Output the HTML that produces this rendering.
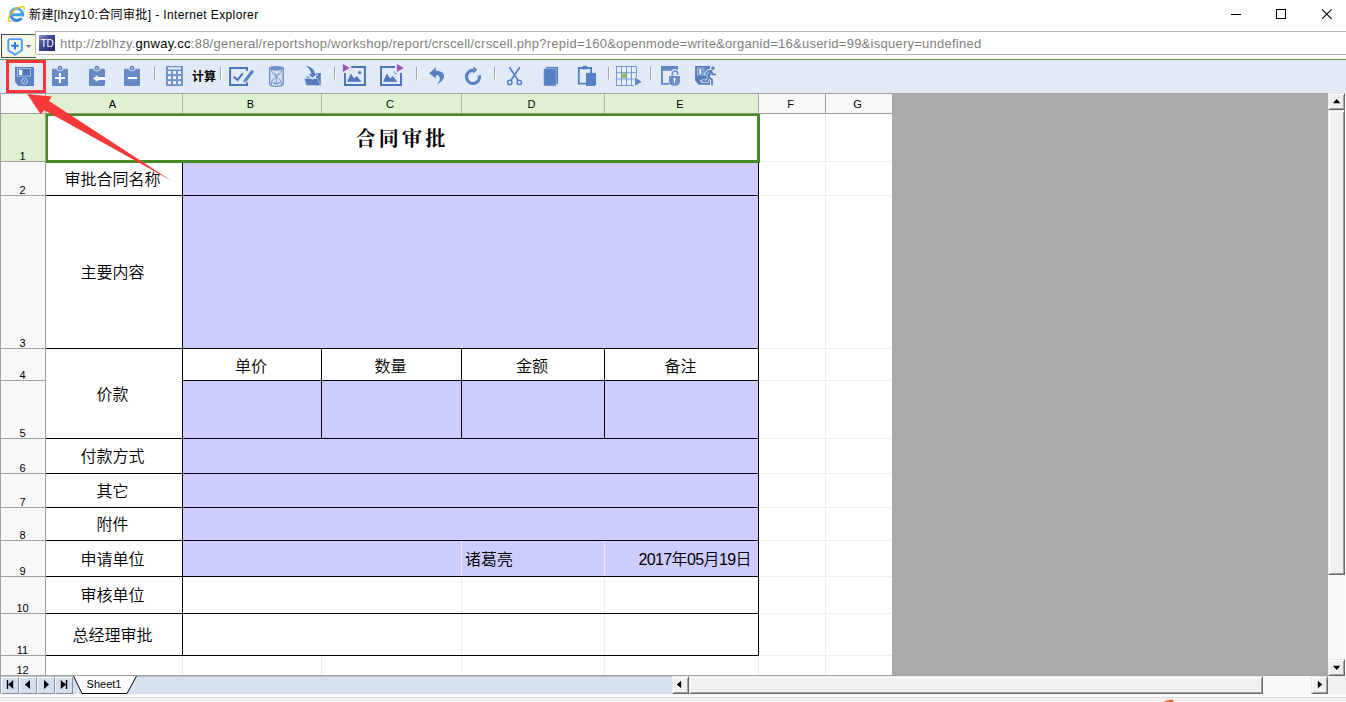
<!DOCTYPE html>
<html lang="zh-CN">
<head>
<meta charset="utf-8">
<title>新建[lhzy10:合同审批] - Internet Explorer</title>
<style>
html,body{margin:0;padding:0;}
body{width:1346px;height:702px;position:relative;overflow:hidden;background:#fff;font-family:"Liberation Sans","Noto Sans CJK SC",sans-serif;}
#win{position:absolute;left:0;top:0;width:1346px;height:702px;overflow:hidden;background:#fff;}
#win div,#win svg,#win span.abs{position:absolute;box-sizing:content-box;}
.t{font-family:"Liberation Sans","Noto Sans CJK SC",sans-serif;font-size:16px;font-weight:350;color:#000;white-space:nowrap;overflow:visible;}
.d{letter-spacing:-0.6px;}
.title{font-family:"Liberation Serif","Noto Serif CJK SC",serif;font-size:20px;font-weight:bold;color:#000;text-align:center;white-space:nowrap;letter-spacing:3.3px;}
.h{font-family:"Liberation Sans","Noto Sans CJK SC",sans-serif;font-size:11px;color:#000;white-space:nowrap;}
</style>
<style>
#win div.sb{box-sizing:border-box;background:#f0f0f0;border-top:1px solid #e8e8e8;border-left:1px solid #e8e8e8;border-right:1px solid #696969;border-bottom:1px solid #696969;box-shadow:inset 1px 1px 0 #fff,inset -1px -1px 0 #a0a0a0;}
.nb{width:16px;height:15px;background:#d3dfee;border-top:1px solid #fff;border-left:1px solid #fff;border-right:1px solid #8c8c8c;border-bottom:1px solid #8c8c8c;}
</style>
</head>
<body>
<div id="win">
<!-- title bar -->
<div id="titlebar" style="left:0;top:0;width:1346px;height:31px;background:#fff;">
<svg style="left:0px;top:0px" width="30" height="30" viewBox="0 0 30 30">
<defs><linearGradient id="ieg" gradientUnits="userSpaceOnUse" x1="0" y1="7" x2="0" y2="22"><stop offset="0" stop-color="#5cb8f0"/><stop offset="1" stop-color="#2a86d2"/></linearGradient></defs>
<ellipse cx="16.650" cy="14.500" rx="5.900" ry="5.950" fill="none" stroke="url(#ieg)" stroke-width="3.100"/>
<rect x="17" y="16.300" width="8" height="1.600" fill="#fff"/>
<rect x="11.500" y="13.300" width="12.600" height="3" fill="#3f9fe3"/>
<path d="M11.300 21.300C7.800 22.300 7.400 18.500 10.800 13.800C14 9.300 19.800 6 23.200 6.700C24.600 7.100 24.500 8.600 23.800 9.700" fill="none" stroke="#f4b400" stroke-width="1.200"/>
</svg>
<div style="left:29px;top:6px;height:18px;line-height:18px;font-size:12px;color:#000;white-space:nowrap;letter-spacing:0.385px" id="ttl">新建[lhzy10:合同审批] - Internet Explorer</div>
<svg style="left:1226px;top:4px" width="112" height="20" viewBox="0 0 112 20">
<path d="M5 10.5h10" stroke="#000" stroke-width="1" fill="none"/>
<rect x="50.5" y="5.5" width="9" height="9" stroke="#000" stroke-width="1" fill="none"/>
<path d="M96 5.3l9.6 9.6M105.6 5.3L96 14.9" stroke="#000" stroke-width="1.1" fill="none"/>
</svg>
</div>
<!-- address row -->
<div id="addr" style="left:35px;top:31px;width:1311px;height:22px;border-top:1px solid #b4b4b4;border-bottom:1px solid #b4b4b4;border-left:1px solid #b4b4b4;background:#fff;"></div>
<div id="tabbtn" style="left:1px;top:34px;width:34px;height:22px;border:1px solid #4a4a4a;border-right:none;background:#f1f8e6;">
<svg style="left:-2px;top:-1px" width="36" height="24" viewBox="0 34 36 24">
<path d="M10.200 39.100H20a1.900 1.900 0 0 1 1.900 1.900V50.200L15.100 54.600L8.300 50.200V41a1.900 1.900 0 0 1 1.900 -1.900z" fill="none" stroke="#4e9cf7" stroke-width="1.900" stroke-linejoin="round"/>
<path d="M15 42v7.600M11.200 45.800h7.600" stroke="#2a7af6" stroke-width="2" fill="none"/>
<path d="M26 45h5.200l-2.600 3z" fill="#6b7885"/>
</svg>
</div>
<div id="addrl" style="left:35px;top:32px;width:1px;height:22px;background:#b4b4b4"></div>
<div id="fav" style="left:39px;top:35px;width:16px;height:16px;background:linear-gradient(135deg,#8f97c9 0%,#4a56a0 35%,#2c377f 70%,#28306f 100%);color:#fff;font-size:10px;line-height:17px;text-align:center;letter-spacing:-0.3px;overflow:hidden">TD</div>
<div id="url" style="left:60px;top:34px;height:19px;line-height:19px;font-size:13px;color:#7f7f7f;white-space:nowrap;letter-spacing:0.252px">http://zblhzy.<span style="color:#000">gnway.cc</span>:88/general/reportshop/workshop/report/crscell/crscell.php?repid=160&amp;openmode=write&amp;organid=16&amp;userid=99&amp;isquery=undefined</div>
<!-- toolbar -->
<div style="left:0;top:59px;width:1346px;height:1px;background:#6f9b45"></div>
<div id="toolbar" style="left:0;top:60px;width:1346px;height:33px;background:#e1eaf6;">
<svg style="left:0;top:0" width="740" height="33" viewBox="0 60 740 33">
<!-- save -->
<path d="M15 67H34V86H18.200L15 81.500Z" fill="#5b80bd"/>
<rect x="17.400" y="68.500" width="13" height="7.700" fill="#4f76b6" stroke="#a9bce0" stroke-width="1"/>
<rect x="18.900" y="69.900" width="3.400" height="5.200" fill="#f4f7fc"/>
<circle cx="24.500" cy="81.300" r="2.900" fill="none" stroke="#d3def0" stroke-width="0.900"/>
<circle cx="24.500" cy="81.300" r="0.700" fill="#d3def0"/>
<!-- clipboards -->
<g fill="#6589c4">
<rect x="52" y="68.800" width="16" height="17.200" rx="1.300"/>
<rect x="89" y="68.800" width="16" height="17.200" rx="1.300"/>
<rect x="124" y="68.800" width="16" height="17.200" rx="1.300"/>
</g>
<g fill="#a9bee2" stroke="#6589c4" stroke-width="1.500">
<circle cx="60" cy="68.200" r="1.700"/><circle cx="97" cy="68.200" r="1.700"/><circle cx="132" cy="68.200" r="1.700"/>
</g>
<g fill="none" stroke="#b9c9e7" stroke-width="1.500">
<path d="M56.500 69.300Q60 72.300 63.500 69.300"/><path d="M93.500 69.300Q97 72.300 100.500 69.300"/><path d="M128.500 69.300Q132 72.300 135.500 69.300"/>
</g>
<path d="M55 78h10M59.900 73v10" stroke="#f6f9fd" stroke-width="2.100" fill="none"/>
<path d="M92.700 78.500L97.900 75V77H105.200V80H97.900V81.800Z" fill="#f2f6fb"/>
<path d="M127.800 78.050h9.300" stroke="#f6f9fd" stroke-width="2.100" fill="none"/>
<!-- separators -->
<g>
<path d="M154.500 67v12.500M220.500 67v12.500M334.500 67v12.500M416.500 67v12.500M494.500 67v12.500M608.500 67v12.500M650.500 67v12.500" stroke="#a2a2a2" stroke-width="1" fill="none"/>
<path d="M155.500 67.500v12.500M221.500 67.500v12.500M335.500 67.500v12.500M417.500 67.500v12.500M495.500 67.500v12.500M609.500 67.500v12.500M651.500 67.500v12.500" stroke="#fff" stroke-width="1" fill="none"/>
</g>
<!-- calculator -->
<rect x="166" y="66" width="17" height="20" fill="#7292ca"/>
<rect x="168" y="67.300" width="13" height="2.100" fill="#e6edf8"/>
<g fill="#eef3fa">
<rect x="168" y="71.100" width="3" height="2.900"/><rect x="173" y="71.100" width="3" height="2.900"/><rect x="178" y="71.100" width="3" height="2.900"/>
<rect x="168" y="76.200" width="3" height="2.900"/><rect x="173" y="76.200" width="3" height="2.900"/><rect x="178" y="76.200" width="3" height="2.900"/>
<rect x="168" y="81.200" width="3" height="2.900"/><rect x="173" y="81.200" width="3" height="2.900"/><rect x="178" y="81.200" width="3" height="2.900"/>
</g>
<text x="192" y="81" font-family="Liberation Sans, Noto Sans CJK SC, sans-serif" font-size="12" font-weight="bold" fill="#000">计算</text>
<!-- check edit -->
<path d="M247 71.100V68H230.100V84.900H247V82.300" fill="none" stroke="#4a76bb" stroke-width="2"/>
<path d="M233.500 76.700L237.600 80L242.800 73.400" fill="none" stroke="#4f7abd" stroke-width="2.200"/>
<path d="M245.300 80.500L253 70.600" fill="none" stroke="#5580c2" stroke-width="3"/>
<path d="M243.200 82.600L244 79.300L246.600 81.300Z" fill="#5580c2"/>
<!-- hourglass -->
<path d="M269.600 68.500V83.700C269.600 87.200 283.200 87.200 283.200 83.700V68.500Z" fill="#d4dff1" stroke="#7292ca" stroke-width="1.400"/>
<ellipse cx="276.400" cy="68.300" rx="7.500" ry="2.400" fill="#7090c9"/>
<path d="M271.300 70.700C272.300 73.500 275 75.300 276.400 77.300C277.800 75.300 280.500 73.500 281.500 70.700M271.600 84.800C270.800 80.800 273.800 78.300 276.400 77.300C279 78.300 282 80.800 281.200 84.800" fill="none" stroke="#6f90ca" stroke-width="1"/>
<path d="M273 82.500Q276.400 85 279.800 82.500" fill="none" stroke="#6f90ca" stroke-width="1.300"/>
<path d="M276.400 76v7M274.500 73L276.400 75.500L278.500 73.500" stroke="#6f90ca" stroke-width="0.900" fill="none"/>
<!-- folder arrow -->
<path d="M316 74L318.500 73H320.800V85.500H316Z" fill="#5b80bd"/>
<path d="M306.300 76.600H310L311 78.500H306.300Z" fill="#7b9ad0"/>
<path d="M304.200 78.500H317.700L320.600 85.600H306.300Z" fill="#567dbb" stroke="#e8eff9" stroke-width="0.500"/>
<path d="M305.800 66C310.500 66.200 314.200 69 314.900 73.700L317.400 73.500L312.500 77.800L308.700 74.300L311.300 74C310.800 70.500 308.800 68 305.800 66Z" fill="#567dbb"/>
<path d="M308.300 75.300L312.500 79L317.800 74.300" fill="none" stroke="#eef3fa" stroke-width="0.900"/>
<!-- image 1 -->
<path d="M351.200 67H364.900V84.900H345V73" fill="none" stroke="#4a76bb" stroke-width="2"/>
<path d="M347.100 81.800L350.900 73.400L354.200 78.600L356.800 76L361.600 81.800Z" fill="#4f7abd"/>
<circle cx="359.600" cy="72.500" r="1.600" fill="#4f7abd"/>
<path d="M342.900 64.100L349.700 67.900L342.900 71.900Z" fill="#a150b9"/>
<!-- image 2 -->
<path d="M395 67H381V84.900H401V73" fill="none" stroke="#4a76bb" stroke-width="2"/>
<path d="M383.100 81.800L386.900 73.400L390.200 78.600L392.800 76L397.600 81.800Z" fill="#4f7abd"/>
<path d="M394.300 71.600A1.700 1.700 0 0 0 396.800 73.600" fill="none" stroke="#4f7abd" stroke-width="1"/>
<path d="M396.900 64.100L403.700 67.900L396.900 71.900Z" fill="#a150b9"/>
<!-- undo -->
<path d="M429.200 73.200L435.900 67.300V70.800C441 70.800 444.300 73 444 76.500C443.700 80 440.500 82.500 437 84.500C439.500 81.500 440.500 79 439.500 77C438.800 75.600 437.500 75.300 435.900 75.300V78.600Z" fill="#5580c2"/>
<!-- redo -->
<path d="M473.600 70.450A6.550 6.550 0 1 0 479.350 75.400" fill="none" stroke="#5580c2" stroke-width="3.100"/>
<path d="M473.400 66.300L477.300 69.500L473.400 73.700Z" fill="#5580c2"/>
<!-- scissors -->
<path d="M509.400 67.200L518.200 80.500M519.800 67.200L510.800 80.500" fill="none" stroke="#5580c2" stroke-width="1.700"/>
<circle cx="509.800" cy="82.400" r="2.200" fill="none" stroke="#5580c2" stroke-width="1.500"/>
<circle cx="519.300" cy="82.400" r="2.200" fill="none" stroke="#5580c2" stroke-width="1.500"/>
<!-- copy -->
<path d="M546 66.900H558.100V84.100H546Z" fill="#5580c2"/>
<path d="M543.700 68.600H556.200V86H543.700Z" fill="#5580c2" stroke="#c9d7ee" stroke-width="0.500"/>
<!-- paste -->
<path d="M586 68H578.800V83.600H586" fill="none" stroke="#5580c2" stroke-width="1.800"/>
<path d="M586 68H591.100V73" fill="none" stroke="#5580c2" stroke-width="1.800"/>
<rect x="582.600" y="65.900" width="4.600" height="3.500" fill="#5580c2"/>
<path d="M586 72.900H596.100V86H586Z" fill="#5580c2"/>
<path d="M594.500 86L596.100 84.500V86Z" fill="#e1eaf6"/>
<!-- grid -->
<rect x="616" y="66" width="21" height="20" fill="#e8eef8"/>
<path d="M616.500 66V86M621.500 66V86M626.500 66V86M631.500 66V86M636.500 66V77M616 66.500H637M616 72.600H637M616 79H635M616 85.500H634" fill="none" stroke="#7a99d0" stroke-width="1"/>
<rect x="622.100" y="73.200" width="4" height="4.700" fill="#8cc152"/>
<path d="M634.300 75.800L642.300 81.800L634.300 86.300Z" fill="#e1eaf6"/>
<path d="M635 77L641.700 81.900L635 85.800Z" fill="#6389c6"/>
<!-- lock window -->
<path d="M661 65.900H678V70.700H662.900V83H669V84.800H661Z" fill="#6287c4"/>
<path d="M672.300 76V73.200A2.900 2.900 0 0 1 677.600 72.300V75" fill="none" stroke="#e1eaf6" stroke-width="3.800"/>
<path d="M672.300 76.500V73.200A2.900 2.900 0 0 1 677.600 72.300V75" fill="none" stroke="#6f90ca" stroke-width="1.700"/>
<path d="M669 76H680V81.500C680 87.400 669 87.400 669 81.500Z" fill="#7090c9"/>
<circle cx="674.500" cy="79" r="1.100" fill="#fff"/><rect x="674" y="79" width="1" height="3.900" fill="#fff"/>
<!-- exit -->
<path d="M695.100 65.900H710V84.800H698.400L695.100 80.500Z" fill="#567dbb"/>
<rect x="697.500" y="68" width="6.500" height="6.900" fill="#6a8cc6" stroke="#b5c6e5" stroke-width="0.800"/>
<rect x="699.300" y="69" width="2" height="5" fill="#eef3fa"/>
<g fill="none" stroke="#e1eaf6" stroke-width="3.400" stroke-linecap="round" stroke-linejoin="round">
<path d="M705.600 74L708.500 70.700H711.300"/>
<path d="M708.500 77.400L707.500 81.100H702"/>
</g>
<path d="M710 70H713V78H710Z" fill="#e1eaf6"/>
<circle cx="712.900" cy="68.300" r="1.700" fill="#567dbb"/>
<g fill="none" stroke="#567dbb" stroke-width="1.800" stroke-linecap="round" stroke-linejoin="round">
<path d="M705.800 74L708.500 70.900H711.200L712.500 74.400H715.200"/>
<path d="M711 71L708.600 77.300L712 79.600V84.600"/>
<path d="M708.600 77.300L707.500 81.100H702.500"/>
</g>
</svg>

</div>
<div id="grid">
<div style="left:0px;top:93px;width:892px;height:582px;background:#fff;"></div>
<div style="left:892px;top:93px;width:436px;height:583px;background:#ababab;"></div>
<div style="left:46px;top:161px;width:846px;height:1px;background:#eeeeee;"></div>
<div style="left:46px;top:195px;width:846px;height:1px;background:#eeeeee;"></div>
<div style="left:46px;top:348px;width:846px;height:1px;background:#eeeeee;"></div>
<div style="left:46px;top:380px;width:846px;height:1px;background:#eeeeee;"></div>
<div style="left:46px;top:438px;width:846px;height:1px;background:#eeeeee;"></div>
<div style="left:46px;top:473px;width:846px;height:1px;background:#eeeeee;"></div>
<div style="left:46px;top:507px;width:846px;height:1px;background:#eeeeee;"></div>
<div style="left:46px;top:540px;width:846px;height:1px;background:#eeeeee;"></div>
<div style="left:46px;top:576px;width:846px;height:1px;background:#eeeeee;"></div>
<div style="left:46px;top:613px;width:846px;height:1px;background:#eeeeee;"></div>
<div style="left:46px;top:655px;width:846px;height:1px;background:#eeeeee;"></div>
<div style="left:182px;top:114px;width:1px;height:561px;background:#eeeeee;"></div>
<div style="left:321px;top:114px;width:1px;height:561px;background:#eeeeee;"></div>
<div style="left:461px;top:114px;width:1px;height:561px;background:#eeeeee;"></div>
<div style="left:604px;top:114px;width:1px;height:561px;background:#eeeeee;"></div>
<div style="left:758px;top:114px;width:1px;height:561px;background:#eeeeee;"></div>
<div style="left:825px;top:114px;width:1px;height:561px;background:#eeeeee;"></div>
<div style="left:46px;top:114px;width:712px;height:47px;background:#fff;"></div>
<div style="left:46px;top:162px;width:136px;height:33px;background:#fff;"></div>
<div style="left:183px;top:162px;width:575px;height:33px;background:#ccccff;"></div>
<div style="left:46px;top:196px;width:136px;height:152px;background:#fff;"></div>
<div style="left:183px;top:196px;width:575px;height:152px;background:#ccccff;"></div>
<div style="left:46px;top:349px;width:136px;height:89px;background:#fff;"></div>
<div style="left:183px;top:349px;width:138px;height:31px;background:#fff;"></div>
<div style="left:183px;top:381px;width:138px;height:57px;background:#ccccff;"></div>
<div style="left:322px;top:349px;width:139px;height:31px;background:#fff;"></div>
<div style="left:322px;top:381px;width:139px;height:57px;background:#ccccff;"></div>
<div style="left:462px;top:349px;width:142px;height:31px;background:#fff;"></div>
<div style="left:462px;top:381px;width:142px;height:57px;background:#ccccff;"></div>
<div style="left:605px;top:349px;width:153px;height:31px;background:#fff;"></div>
<div style="left:605px;top:381px;width:153px;height:57px;background:#ccccff;"></div>
<div style="left:46px;top:439px;width:136px;height:34px;background:#fff;"></div>
<div style="left:183px;top:439px;width:575px;height:34px;background:#ccccff;"></div>
<div style="left:46px;top:474px;width:136px;height:33px;background:#fff;"></div>
<div style="left:183px;top:474px;width:575px;height:33px;background:#ccccff;"></div>
<div style="left:46px;top:508px;width:136px;height:32px;background:#fff;"></div>
<div style="left:183px;top:508px;width:575px;height:32px;background:#ccccff;"></div>
<div style="left:46px;top:541px;width:136px;height:35px;background:#fff;"></div>
<div style="left:183px;top:541px;width:278px;height:35px;background:#ccccff;"></div>
<div style="left:462px;top:541px;width:142px;height:35px;background:#ccccff;"></div>
<div style="left:605px;top:541px;width:153px;height:35px;background:#ccccff;"></div>
<div style="left:46px;top:577px;width:136px;height:36px;background:#fff;"></div>
<div style="left:183px;top:577px;width:278px;height:36px;background:#fff;"></div>
<div style="left:46px;top:614px;width:136px;height:41px;background:#fff;"></div>
<div style="left:183px;top:614px;width:278px;height:41px;background:#fff;"></div>
<div style="left:461px;top:541px;width:1px;height:35px;background:#e9e9f6;"></div>
<div style="left:604px;top:541px;width:1px;height:35px;background:#e9e9f6;"></div>
<div style="left:46px;top:195px;width:713px;height:1px;background:#000;"></div>
<div style="left:46px;top:348px;width:713px;height:1px;background:#000;"></div>
<div style="left:46px;top:438px;width:713px;height:1px;background:#000;"></div>
<div style="left:46px;top:473px;width:713px;height:1px;background:#000;"></div>
<div style="left:46px;top:507px;width:713px;height:1px;background:#000;"></div>
<div style="left:46px;top:540px;width:713px;height:1px;background:#000;"></div>
<div style="left:46px;top:576px;width:713px;height:1px;background:#000;"></div>
<div style="left:46px;top:613px;width:713px;height:1px;background:#000;"></div>
<div style="left:46px;top:655px;width:713px;height:1px;background:#000;"></div>
<div style="left:182px;top:380px;width:577px;height:1px;background:#000;"></div>
<div style="left:182px;top:162px;width:1px;height:494px;background:#000;"></div>
<div style="left:758px;top:162px;width:1px;height:494px;background:#000;"></div>
<div style="left:321px;top:348px;width:1px;height:91px;background:#000;"></div>
<div style="left:461px;top:348px;width:1px;height:91px;background:#000;"></div>
<div style="left:604px;top:348px;width:1px;height:91px;background:#000;"></div>
<div style="left:0px;top:93px;width:893px;height:21px;background:#a0a0a0;"></div>
<div style="left:1px;top:94px;width:44px;height:19px;background:#f8f8f8;"></div>
<div style="left:46px;top:94px;width:136px;height:19px;background:#e0f1d1;"></div>
<div class="h" style="left:43px;top:95px;width:139px;height:19px;line-height:19px;text-align:center;">A</div>
<div style="left:183px;top:94px;width:138px;height:19px;background:#e0f1d1;"></div>
<div class="h" style="left:180px;top:95px;width:141px;height:19px;line-height:19px;text-align:center;">B</div>
<div style="left:322px;top:94px;width:139px;height:19px;background:#e0f1d1;"></div>
<div class="h" style="left:319px;top:95px;width:142px;height:19px;line-height:19px;text-align:center;">C</div>
<div style="left:462px;top:94px;width:142px;height:19px;background:#e0f1d1;"></div>
<div class="h" style="left:459px;top:95px;width:145px;height:19px;line-height:19px;text-align:center;">D</div>
<div style="left:605px;top:94px;width:153px;height:19px;background:#e0f1d1;"></div>
<div class="h" style="left:602px;top:95px;width:156px;height:19px;line-height:19px;text-align:center;">E</div>
<div style="left:759px;top:94px;width:66px;height:19px;background:#f9f9f9;"></div>
<div class="h" style="left:756px;top:95px;width:69px;height:19px;line-height:19px;text-align:center;">F</div>
<div style="left:826px;top:94px;width:66px;height:19px;background:#f9f9f9;"></div>
<div class="h" style="left:823px;top:95px;width:69px;height:19px;line-height:19px;text-align:center;">G</div>
<div style="left:182px;top:94px;width:1px;height:19px;background:#a9b79e;"></div>
<div style="left:321px;top:94px;width:1px;height:19px;background:#a9b79e;"></div>
<div style="left:461px;top:94px;width:1px;height:19px;background:#a9b79e;"></div>
<div style="left:604px;top:94px;width:1px;height:19px;background:#a9b79e;"></div>
<div style="left:46px;top:113px;width:713px;height:1px;background:#7f9a6c;"></div>
<div style="left:0px;top:114px;width:46px;height:561px;background:#a0a0a0;"></div>
<div style="left:1px;top:114px;width:44px;height:47px;background:#e0f1d1;"></div>
<div class="h" style="left:0px;top:150px;width:45px;height:13px;line-height:13px;text-align:center">1</div>
<div style="left:1px;top:162px;width:44px;height:33px;background:#f8f8f8;"></div>
<div class="h" style="left:0px;top:184px;width:45px;height:13px;line-height:13px;text-align:center">2</div>
<div style="left:1px;top:196px;width:44px;height:152px;background:#f8f8f8;"></div>
<div class="h" style="left:0px;top:337px;width:45px;height:13px;line-height:13px;text-align:center">3</div>
<div style="left:1px;top:349px;width:44px;height:31px;background:#f8f8f8;"></div>
<div class="h" style="left:0px;top:369px;width:45px;height:13px;line-height:13px;text-align:center">4</div>
<div style="left:1px;top:381px;width:44px;height:57px;background:#f8f8f8;"></div>
<div class="h" style="left:0px;top:427px;width:45px;height:13px;line-height:13px;text-align:center">5</div>
<div style="left:1px;top:439px;width:44px;height:34px;background:#f8f8f8;"></div>
<div class="h" style="left:0px;top:462px;width:45px;height:13px;line-height:13px;text-align:center">6</div>
<div style="left:1px;top:474px;width:44px;height:33px;background:#f8f8f8;"></div>
<div class="h" style="left:0px;top:496px;width:45px;height:13px;line-height:13px;text-align:center">7</div>
<div style="left:1px;top:508px;width:44px;height:32px;background:#f8f8f8;"></div>
<div class="h" style="left:0px;top:529px;width:45px;height:13px;line-height:13px;text-align:center">8</div>
<div style="left:1px;top:541px;width:44px;height:35px;background:#f8f8f8;"></div>
<div class="h" style="left:0px;top:565px;width:45px;height:13px;line-height:13px;text-align:center">9</div>
<div style="left:1px;top:577px;width:44px;height:36px;background:#f8f8f8;"></div>
<div class="h" style="left:0px;top:602px;width:45px;height:13px;line-height:13px;text-align:center">10</div>
<div style="left:1px;top:614px;width:44px;height:41px;background:#f8f8f8;"></div>
<div class="h" style="left:0px;top:644px;width:45px;height:13px;line-height:13px;text-align:center">11</div>
<div style="left:1px;top:656px;width:44px;height:19px;background:#f8f8f8;"></div>
<div class="h" style="left:0px;top:664px;width:45px;height:13px;line-height:13px;text-align:center">12</div>
<div style="left:46px;top:114px;width:709px;height:44px;border:solid #468b24;border-width:2px 3px 3px 2px;background:none"></div>
<div class="title" style="left:45px;top:118px;width:714px;height:43px;line-height:43px;text-align:center;">合同审批</div>
<div class="t" style="left:44px;top:163px;width:137px;height:33px;line-height:33px;text-align:center;">审批合同名称</div>
<div class="t" style="left:44px;top:197px;width:137px;height:152px;line-height:152px;text-align:center;">主要内容</div>
<div class="t" style="left:44px;top:440px;width:137px;height:34px;line-height:34px;text-align:center;">付款方式</div>
<div class="t" style="left:44px;top:475px;width:137px;height:33px;line-height:33px;text-align:center;">其它</div>
<div class="t" style="left:44px;top:509px;width:137px;height:32px;line-height:32px;text-align:center;">附件</div>
<div class="t" style="left:44px;top:542px;width:137px;height:35px;line-height:35px;text-align:center;">申请单位</div>
<div class="t" style="left:44px;top:578px;width:137px;height:36px;line-height:36px;text-align:center;">审核单位</div>
<div class="t" style="left:44px;top:615px;width:137px;height:41px;line-height:41px;text-align:center;">总经理审批</div>
<div class="t" style="left:44px;top:350px;width:137px;height:89px;line-height:89px;text-align:center;">价款</div>
<div class="t" style="left:181px;top:351px;width:140px;height:31px;line-height:31px;text-align:center;">单价</div>
<div class="t" style="left:320px;top:351px;width:141px;height:31px;line-height:31px;text-align:center;">数量</div>
<div class="t" style="left:460px;top:351px;width:144px;height:31px;line-height:31px;text-align:center;">金额</div>
<div class="t" style="left:603px;top:351px;width:155px;height:31px;line-height:31px;text-align:center;">备注</div>
<div class="t" style="left:465px;top:542px;width:139px;height:35px;line-height:35px;text-align:left;">诸葛亮</div>
<div class="t d" style="left:605px;top:542px;width:146px;height:35px;line-height:35px;text-align:right;">2017年05月19日</div>
</div>
<!-- vertical scrollbar -->
<div style="left:1328px;top:93px;width:17px;height:583px;background:#f8f8f8"></div>
<div style="left:1345px;top:93px;width:1px;height:583px;background:#fff"></div>
<div class="sb" style="left:1328px;top:93px;width:17px;height:17px;"></div>
<svg style="left:1328px;top:93px" width="17" height="17"><path d="M5 10.200h7.400l-3.700-4.200z" fill="#000"/></svg>
<div class="sb" style="left:1328px;top:110px;width:17px;height:465px;"></div>
<div class="sb" style="left:1328px;top:659px;width:17px;height:17px;"></div>
<svg style="left:1328px;top:659px" width="17" height="17"><path d="M5 6.800h7.400l-3.700 4.200z" fill="#000"/></svg>
<!-- tab bar -->
<div style="left:0;top:676px;width:672px;height:18px;background:#d6e1f0"></div>
<div style="left:0;top:675px;width:1328px;height:1px;background:#a3a3a3"></div>
<div style="left:0;top:676px;width:672px;height:1px;background:#b9c2cf"></div>
<div style="left:0;top:675px;width:1px;height:19px;background:#a0a0a0"></div>
<!-- horizontal scrollbar -->
<div style="left:672px;top:676px;width:656px;height:18px;background:#f8f8f8"></div>
<div style="left:1328px;top:676px;width:18px;height:18px;background:#f0f0f0"></div>
<div class="sb" style="left:672px;top:676px;width:17px;height:18px;"></div>
<svg style="left:672px;top:676px" width="17" height="18"><path d="M9.200 4.800v7.400l-4.400-3.700z" fill="#000"/></svg>
<div class="sb" style="left:689px;top:676px;width:574px;height:18px;"></div>
<div class="sb" style="left:1311px;top:676px;width:17px;height:18px;"></div>
<svg style="left:1311px;top:676px" width="17" height="18"><path d="M6.800 4.800v7.400l4.400-3.700z" fill="#000"/></svg>
<!-- nav buttons -->
<div class="nb" style="left:1px;top:677px;"></div>
<div class="nb" style="left:19px;top:677px;"></div>
<div class="nb" style="left:37px;top:677px;"></div>
<div class="nb" style="left:55px;top:677px;"></div>
<svg style="left:0px;top:677px" width="74" height="17" viewBox="0 677 74 17">
<path d="M6.800 680h1.400v9H6.800zM13.200 680v9L8.200 684.500z" fill="#000"/>
<path d="M30 680v9l-5.100-4.500z" fill="#000"/>
<path d="M44 680v9l5.100-4.500z" fill="#000"/>
<path d="M60.800 680v9l5-4.500zM65.800 680h1.400v9h-1.400z" fill="#000"/>
</svg>
<!-- sheet tab -->
<svg style="left:72px;top:675px" width="70" height="20" viewBox="0 0 70 20">
<path d="M1.500 1L10 18.500H55L64.500 1z" fill="#fff"/>
<path d="M1.500 1L10 18.500H55L64.500 1" fill="none" stroke="#000" stroke-width="1"/>
</svg>
<div style="left:84px;top:677px;width:40px;height:14px;line-height:14px;font-size:11px;color:#000;text-align:center">Sheet1</div>
<!-- bottom strip -->
<div style="left:0;top:694px;width:1346px;height:8px;background:#f0f0f0"></div>
<div style="left:0;top:694px;width:1346px;height:3px;background:#f7fbfe"></div>
<div style="left:0;top:697px;width:1346px;height:1px;background:#dedede"></div>
<svg style="left:1160px;top:698px" width="18" height="4" viewBox="1160 698 18 4"><path d="M1163 702C1166 700.500 1169 699.700 1172.500 699.600L1174.300 702z" fill="#f4692c"/></svg>
<!-- red highlight -->
<div style="left:6px;top:60px;width:34px;height:27px;border:3px solid #f8343a;background:none"></div>
<svg style="left:0;top:85px" width="200" height="110" viewBox="0 85 200 110">
<path d="M27.200 94L51.700 96.400L49 100.900L171.500 180.700L44.500 110.300L40.600 114.300Z" fill="#f9383a"/>
</svg>
</div>
</body>
</html>
